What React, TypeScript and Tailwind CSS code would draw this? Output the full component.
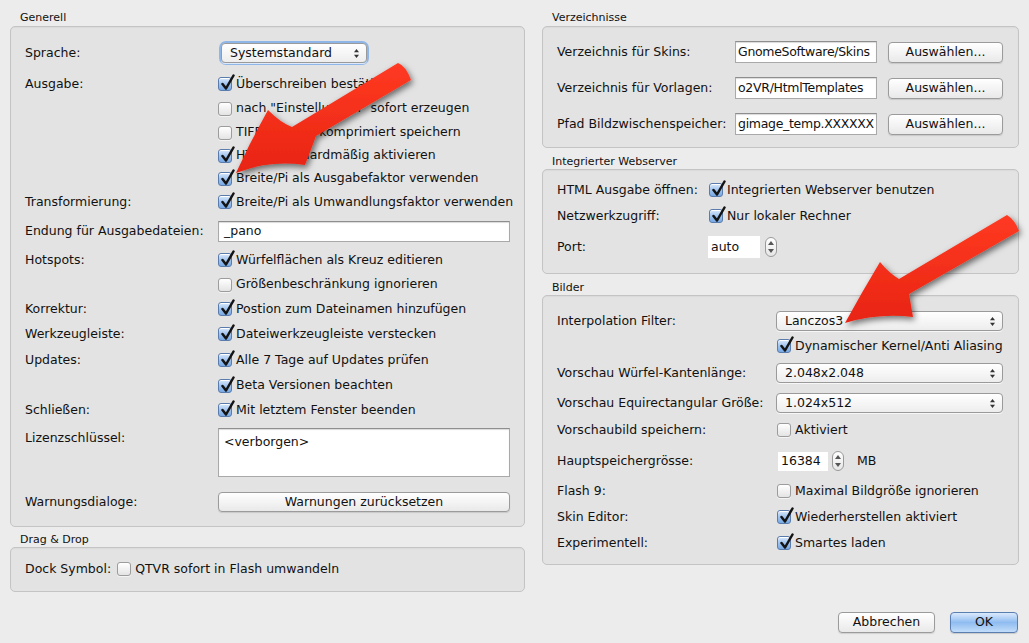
import React from "react";

function Check({ checked }: { checked: boolean }) {
  return (
    <span
      className={
        checked
          ? "relative inline-block w-[14px] h-[14px] shrink-0 rounded-[3px] border border-[#5a7cac] bg-linear-to-b from-[#dbe9fb] via-[#9fc3ef] to-[#78a9e4] shadow-[inset_0_1px_0_#fff]"
          : "relative inline-block w-[14px] h-[14px] shrink-0 rounded-[3px] border border-[#9c9c9c] bg-linear-to-b from-white to-[#e4e4e4] shadow-[0_1px_0_rgba(255,255,255,0.6)]"
      }
    >
      {checked && (
        <svg className="absolute left-[1px] top-[-4px] w-[15px] h-[17px]" viewBox="0 0 15 17">
          <path d="M2.5 10 L6 14.5 L13.5 1.5" stroke="#141414" strokeWidth="2.5" fill="none" strokeLinejoin="round" strokeLinecap="round" />
        </svg>
      )}
    </span>
  );
}

function CheckLabel({ checked, children }: { checked: boolean; children: React.ReactNode }) {
  return (
    <div className="flex items-center gap-[4px] whitespace-nowrap">
      <Check checked={checked} />
      <span>{children}</span>
    </div>
  );
}

function UpDown() {
  return (
    <svg className="w-[7px] h-[11px]" viewBox="0 0 7 11">
      <path d="M3.5 1 L6 4.2 L1 4.2 Z" fill="#333" />
      <path d="M3.5 10 L6 6.8 L1 6.8 Z" fill="#333" />
    </svg>
  );
}

function Select({ value, className }: { value: string; className: string }) {
  return (
    <div
      className={
        "flex items-center justify-between rounded-[4px] border border-[#9a9a9a] bg-linear-to-b from-white to-[#ededed] pl-[8px] pr-[6px] shadow-[0_1px_0_rgba(255,255,255,0.7)] " +
        className
      }
    >
      <span className="whitespace-nowrap">{value}</span>
      <UpDown />
    </div>
  );
}

function Stepper() {
  return (
    <div className="flex flex-col items-center justify-between w-[12px] h-[20px] rounded-full border border-[#9a9a9a] bg-linear-to-b from-white to-[#e6e6e6] py-[3px]">
      <svg className="w-[6px] h-[4px]" viewBox="0 0 6 4">
        <path d="M3 0 L6 4 L0 4 Z" fill="#555" />
      </svg>
      <svg className="w-[6px] h-[4px]" viewBox="0 0 6 4">
        <path d="M3 4 L6 0 L0 0 Z" fill="#555" />
      </svg>
    </div>
  );
}

function Btn({ children, className }: { children: React.ReactNode; className: string }) {
  return (
    <div
      className={
        "flex items-center justify-center rounded-[4px] border border-[#9b9b9b] bg-linear-to-b from-white to-[#e9e9e9] shadow-[0_1px_1px_rgba(0,0,0,0.12)] whitespace-nowrap " +
        className
      }
    >
      {children}
    </div>
  );
}

function TextInput({ children, className }: { children: React.ReactNode; className: string }) {
  return (
    <div
      className={
        "flex items-center overflow-hidden whitespace-nowrap bg-white border border-[#a9a9a9] border-t-[#8e8e8e] shadow-[inset_0_1px_1px_rgba(0,0,0,0.15)] shrink-0 " +
        className
      }
    >
      {children}
    </div>
  );
}

const box = "rounded-[5px] border border-[#c4c4c4] bg-[#e3e3e3] shadow-[inset_0_1px_1px_rgba(0,0,0,0.04)]";

export default function App() {
  return (
    <div className="relative w-[1029px] h-[643px] bg-[#ececec] text-[12.5px] text-[#111] font-['DejaVu_Sans',sans-serif] px-[10px] pt-[10px] overflow-hidden">
      <div className="flex gap-[17px] items-start">
        {/* Left column */}
        <div className="w-[515px] flex flex-col">
          <div className="h-[16px] pl-[10px] text-[11px] leading-[16px]">Generell</div>
          <div className={box + " flex flex-col pl-[14px] pr-[14px] pt-[15px] pb-[14px]"}>
            <div className="flex items-center h-[22px]">
              <div className="w-[193px] shrink-0">Sprache:</div>
              <div className="ml-[3px] w-[146px] rounded-[5px] shadow-[0_0_0_2px_#8fb6e9]">
                <Select value="Systemstandard" className="h-[20px]" />
              </div>
            </div>
            <div className="flex items-center h-[24px] mt-[8px]">
              <div className="w-[193px] shrink-0">Ausgabe:</div>
              <CheckLabel checked>Überschreiben bestätigen</CheckLabel>
            </div>
            <div className="flex items-center h-[25px]">
              <div className="w-[193px] shrink-0"></div>
              <CheckLabel checked={false}>nach "Einstellungen" sofort erzeugen</CheckLabel>
            </div>
            <div className="flex items-center h-[23px]">
              <div className="w-[193px] shrink-0"></div>
              <CheckLabel checked={false}>TIFF-Dateien komprimiert speichern</CheckLabel>
            </div>
            <div className="flex items-center h-[23px]">
              <div className="w-[193px] shrink-0"></div>
              <CheckLabel checked>HTML standardmäßig aktivieren</CheckLabel>
            </div>
            <div className="flex items-center h-[23px]">
              <div className="w-[193px] shrink-0"></div>
              <CheckLabel checked>Breite/Pi als Ausgabefaktor verwenden</CheckLabel>
            </div>
            <div className="flex items-center h-[24px]">
              <div className="w-[193px] shrink-0">Transformierung:</div>
              <CheckLabel checked>Breite/Pi als Umwandlungsfaktor verwenden</CheckLabel>
            </div>
            <div className="flex items-center h-[34px]">
              <div className="w-[193px] shrink-0">Endung für Ausgabedateien:</div>
              <TextInput className="w-[292px] h-[21px] px-[5px]">_pano</TextInput>
            </div>
            <div className="flex items-center h-[24px]">
              <div className="w-[193px] shrink-0">Hotspots:</div>
              <CheckLabel checked>Würfelflächen als Kreuz editieren</CheckLabel>
            </div>
            <div className="flex items-center h-[25px]">
              <div className="w-[193px] shrink-0"></div>
              <CheckLabel checked={false}>Größenbeschränkung ignorieren</CheckLabel>
            </div>
            <div className="flex items-center h-[24px]">
              <div className="w-[193px] shrink-0">Korrektur:</div>
              <CheckLabel checked>Postion zum Dateinamen hinzufügen</CheckLabel>
            </div>
            <div className="flex items-center h-[26px]">
              <div className="w-[193px] shrink-0">Werkzeugleiste:</div>
              <CheckLabel checked>Dateiwerkzeugleiste verstecken</CheckLabel>
            </div>
            <div className="flex items-center h-[26px]">
              <div className="w-[193px] shrink-0">Updates:</div>
              <CheckLabel checked>Alle 7 Tage auf Updates prüfen</CheckLabel>
            </div>
            <div className="flex items-center h-[25px]">
              <div className="w-[193px] shrink-0"></div>
              <CheckLabel checked>Beta Versionen beachten</CheckLabel>
            </div>
            <div className="flex items-center h-[24px]">
              <div className="w-[193px] shrink-0">Schließen:</div>
              <CheckLabel checked>Mit letztem Fenster beenden</CheckLabel>
            </div>
            <div className="flex items-start h-[49px] mt-[6px]">
              <div className="w-[193px] shrink-0 pt-[1px]">Lizenzschlüssel:</div>
              <TextInput className="w-[292px] h-[49px] items-start px-[5px] pt-[4px]">&lt;verborgen&gt;</TextInput>
            </div>
            <div className="flex items-center h-[20px] mt-[15px]">
              <div className="w-[193px] shrink-0">Warnungsdialoge:</div>
              <Btn className="w-[292px] h-[20px]">Warnungen zurücksetzen</Btn>
            </div>
          </div>
          <div className="h-[20px] pt-[6px] pl-[10px] text-[11px] leading-[14px]">Drag &amp; Drop</div>
          <div className={box + " flex flex-col pl-[14px] pr-[14px] pt-[10px] pb-[11px]"}>
            <div className="flex items-center h-[22px] gap-[6px]">
              <span>Dock Symbol:</span>
              <CheckLabel checked={false}>QTVR sofort in Flash umwandeln</CheckLabel>
            </div>
          </div>
          <div className="h-[20px]"></div>
        </div>

        {/* Right column */}
        <div className="w-[477px] flex flex-col">
          <div className="h-[16px] pl-[10px] text-[11px] leading-[16px]">Verzeichnisse</div>
          <div className={box + " flex flex-col gap-[14px] pl-[14px] pr-[15px] pt-[14px] pb-[12px]"}>
            {[
              ["Verzeichnis für Skins:", "GnomeSoftware/Skins"],
              ["Verzeichnis für Vorlagen:", "o2VR/HtmlTemplates"],
              ["Pfad Bildzwischenspeicher:", "gimage_temp.XXXXXX"],
            ].map(([l, v]) => (
              <div key={l} className="flex items-center h-[22px]">
                <div className="w-[178px] shrink-0 whitespace-nowrap">{l}</div>
                <TextInput className="w-[142px] h-[22px] px-[2px] tracking-[-0.3px]">{v}</TextInput>
                <Btn className="ml-[11px] w-[115px] h-[21px]">Auswählen...</Btn>
              </div>
            ))}
          </div>

          <div className="h-[21px] pt-[7px] pl-[10px] text-[11px] leading-[14px]">Integrierter Webserver</div>
          <div className={box + " flex flex-col pl-[14px] pr-[14px] pt-[8px] pb-[15px]"}>
            <div className="flex items-center h-[24px]">
              <div className="w-[152px] shrink-0 whitespace-nowrap">HTML Ausgabe öffnen:</div>
              <CheckLabel checked>Integrierten Webserver benutzen</CheckLabel>
            </div>
            <div className="flex items-center h-[24px] mt-[2px]">
              <div className="w-[152px] shrink-0">Netzwerkzugriff:</div>
              <CheckLabel checked>Nur lokaler Rechner</CheckLabel>
            </div>
            <div className="flex items-center h-[22px] mt-[8px]">
              <div className="w-[151px] shrink-0">Port:</div>
              <TextInput className="w-[52px] h-[22px] px-[3px] border-none shadow-none">auto</TextInput>
              <div className="ml-[5px]">
                <Stepper />
              </div>
            </div>
          </div>

          <div className="h-[21px] pt-[7px] pl-[10px] text-[11px] leading-[14px]">Bilder</div>
          <div className={box + " flex flex-col pl-[14px] pr-[15px] pt-[14px] pb-[9px]"}>
            <div className="flex items-center h-[22px]">
              <div className="w-[219px] shrink-0">Interpolation Filter:</div>
              <Select value="Lanczos3" className="w-[227px] h-[20px]" />
            </div>
            <div className="flex items-center h-[24px] mt-[2px]">
              <div className="w-[220px] shrink-0"></div>
              <CheckLabel checked>Dynamischer Kernel/Anti Aliasing</CheckLabel>
            </div>
            <div className="flex items-center h-[22px] mt-[4px]">
              <div className="w-[219px] shrink-0">Vorschau Würfel-Kantenlänge:</div>
              <Select value="2.048x2.048" className="w-[227px] h-[20px]" />
            </div>
            <div className="flex items-center h-[22px] mt-[8px]">
              <div className="w-[219px] shrink-0 whitespace-nowrap">Vorschau Equirectangular Größe:</div>
              <Select value="1.024x512" className="w-[227px] h-[20px]" />
            </div>
            <div className="flex items-center h-[24px] mt-[4px]">
              <div className="w-[220px] shrink-0">Vorschaubild speichern:</div>
              <CheckLabel checked={false}>Aktiviert</CheckLabel>
            </div>
            <div className="flex items-center h-[22px] mt-[8px]">
              <div className="w-[221px] shrink-0">Hauptspeichergrösse:</div>
              <TextInput className="w-[50px] h-[19px] px-[3px] border-none shadow-none">16384</TextInput>
              <div className="ml-[4px]">
                <Stepper />
              </div>
              <span className="ml-[13px]">MB</span>
            </div>
            <div className="flex items-center h-[24px] mt-[7px]">
              <div className="w-[220px] shrink-0">Flash 9:</div>
              <CheckLabel checked={false}>Maximal Bildgröße ignorieren</CheckLabel>
            </div>
            <div className="flex items-center h-[24px] mt-[2px]">
              <div className="w-[220px] shrink-0">Skin Editor:</div>
              <CheckLabel checked>Wiederherstellen aktiviert</CheckLabel>
            </div>
            <div className="flex items-center h-[24px] mt-[2px]">
              <div className="w-[220px] shrink-0">Experimentell:</div>
              <CheckLabel checked>Smartes laden</CheckLabel>
            </div>
          </div>
        </div>
      </div>

      {/* Footer buttons */}
      <div className="flex justify-end gap-[15px] pr-[1px]">
        <Btn className="w-[97px] h-[21px]">Abbrechen</Btn>
        <div className="flex items-center justify-center w-[68px] h-[21px] rounded-[4px] border border-[#5b7eb1] bg-linear-to-b from-[#dbe9fb] via-[#8fbcf0] to-[#c3ddf9] shadow-[0_1px_1px_rgba(0,0,0,0.15)]">
          OK
        </div>
      </div>

      {/* Red annotation arrows */}
      <svg className="absolute left-0 top-0 w-[1029px] h-[643px] pointer-events-none" viewBox="0 0 1029 643">
        <defs>
          <filter id="sh" x="-20%" y="-20%" width="140%" height="140%">
            <feDropShadow dx="2" dy="3" stdDeviation="3" floodColor="#000" floodOpacity="0.55" />
          </filter>
          <linearGradient id="rg" x1="0" y1="0" x2="0" y2="1">
            <stop offset="0" stopColor="#ff3a22" />
            <stop offset="1" stopColor="#e82412" />
          </linearGradient>
        </defs>
        <path
          d="M398,63 Q406,66 411,80 L316,136 Q311,150 305,165 Q268,160 236,173 Q251,140 268,110 Q281,123 292,127 Z"
          fill="url(#rg)"
          filter="url(#sh)"
        />
        <path
          d="M1007,215 Q1015,220 1019,231 L909,294 Q911,305 913,317 Q878,313 845,323 Q862,292 880,262 Q889,273 899,279 Z"
          fill="url(#rg)"
          filter="url(#sh)"
        />
      </svg>
    </div>
  );
}
